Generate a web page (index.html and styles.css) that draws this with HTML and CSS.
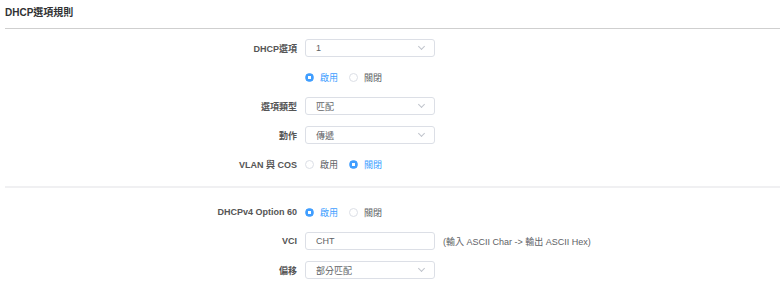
FILE: index.html
```html
<!DOCTYPE html>
<html lang="zh-Hant">
  <head>
    <meta charset="UTF-8" />
    <meta name="viewport" content="width=device-width, initial-scale=1.0" />
    <title>DHCP選項規則</title>
    <link rel="stylesheet" href="styles.css">
  </head>

  <body>
    <div class="page">
      <h2 class="title">DHCP選項規則</h2>

      <section class="form">
        <div class="row">
          <label class="label">DHCP選項</label>
          <div class="select"><span>1</span><i class="arrow"></i></div>
        </div>
        <div class="row">
          <span class="label"></span>
          <div class="radios">
            <span class="radio checked"><i></i>啟用</span>
            <span class="radio"><i></i>關閉</span>
          </div>
        </div>
        <div class="row">
          <label class="label">選項類型</label>
          <div class="select"><span>匹配</span><i class="arrow"></i></div>
        </div>
        <div class="row">
          <label class="label">動作</label>
          <div class="select"><span>傳遞</span><i class="arrow"></i></div>
        </div>
        <div class="row">
          <label class="label">VLAN 與 COS</label>
          <div class="radios">
            <span class="radio"><i></i>啟用</span>
            <span class="radio checked"><i></i>關閉</span>
          </div>
        </div>
      </section>

      <hr class="divider" />

      <section class="form">
        <div class="row">
          <label class="label">DHCPv4 Option 60</label>
          <div class="radios">
            <span class="radio checked"><i></i>啟用</span>
            <span class="radio"><i></i>關閉</span>
          </div>
        </div>
        <div class="row">
          <label class="label">VCI</label>
          <div class="input">CHT</div>
          <span class="hint">(輸入 ASCII Char -&gt; 輸出 ASCII Hex)</span>
        </div>
        <div class="row">
          <label class="label">偏移</label>
          <div class="select"><span>部分匹配</span><i class="arrow"></i></div>
        </div>
      </section>
    </div>
  </body>
</html>
```

FILE: styles.css
```css
* {
  margin: 0;
  padding: 0;
  box-sizing: border-box;
}

body {
  font-family: "Liberation Sans", "Noto Sans CJK TC", sans-serif;
  font-size: 9px;
  color: #606266;
  background-color: white;
}

.page {
  padding-left: 5px;
}

.title {
  font-size: 10px;
  font-weight: bold;
  color: #303133;
  line-height: 12px;
  padding: 7px 0 9px;
  border-bottom: 1px solid #cfcfcf;
}

.form {
  display: flex;
  flex-direction: column;
  gap: 11px;
  margin-top: 10px;
}

.divider {
  border: none;
  height: 2px;
  background-color: #f0f0f2;
  margin-top: 13px;
  margin-bottom: 15px;
}

.divider + .form {
  margin-top: 0;
}

.row {
  display: flex;
  align-items: center;
  height: 18px;
}

.label {
  width: 292px;
  margin-right: 8px;
  text-align: right;
  font-weight: bold;
  color: #555;
}

.select,
.input {
  display: flex;
  align-items: center;
  justify-content: space-between;
  width: 130px;
  height: 18px;
  padding: 0 8px 0 10px;
  border: 1px solid #dcdfe6;
  border-radius: 3px;
  color: #606266;
}

.arrow {
  width: 5px;
  height: 5px;
  border-right: 1px solid #c0c4cc;
  border-bottom: 1px solid #c0c4cc;
  transform: rotate(45deg);
  margin-top: -3px;
  margin-right: 2px;
}

.hint {
  margin-left: 8px;
  color: #606266;
}

.radios {
  display: flex;
  gap: 11px;
}

.radio {
  display: flex;
  align-items: center;
  gap: 6px;
  color: #606266;
}

.radio i {
  width: 9px;
  height: 9px;
  border: 1px solid #dcdfe6;
  border-radius: 50%;
  background: white;
}

.radio.checked {
  color: #409eff;
}

.radio.checked i {
  border-color: #409eff;
  background: radial-gradient(circle, white 0 1.5px, #409eff 2px);
}
```
